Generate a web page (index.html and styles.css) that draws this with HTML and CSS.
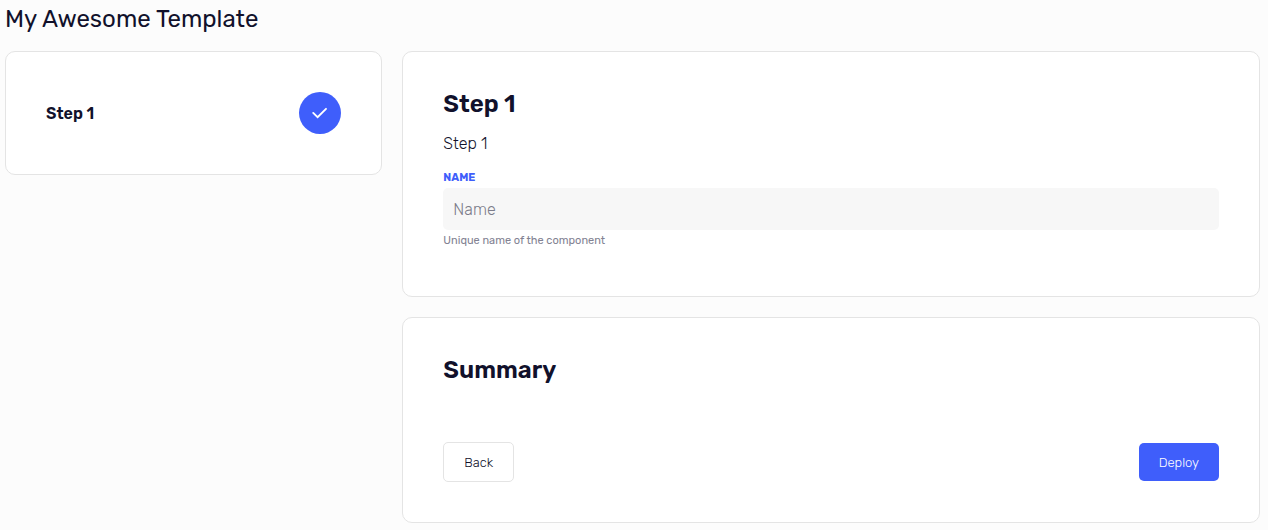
FILE: index.html
```html
<!DOCTYPE html>
<html lang="en">
<head>
<meta charset="utf-8">
<title>My Awesome Template</title>
<meta name="viewport" content="width=device-width, initial-scale=1">
<link rel="stylesheet" href="styles.css">
</head>
<body>
<main class="page">
  <h1 class="page-title">My Awesome Template</h1>
  <div class="layout">
    <nav class="card steps" aria-label="Steps">
      <span class="step-name">Step 1</span>
      <span class="step-badge">
        <svg viewBox="0 0 20 20" width="20" height="20" aria-hidden="true"><path d="M3.2 9.9 7.6 14.2 16 5.8" fill="none" stroke="currentColor" stroke-width="1.9" stroke-linecap="round"/></svg>
      </span>
    </nav>
    <form class="content">
      <section class="card">
        <h2 class="card-title">Step 1</h2>
        <p class="card-text">Step 1</p>
        <label class="label" for="name">NAME</label>
        <input class="input" id="name" type="text" placeholder="Name">
        <p class="hint">Unique name of the component</p>
      </section>
      <section class="card">
        <h2 class="card-title">Summary</h2>
        <div class="actions">
          <button class="button" type="button">Back</button>
          <button class="button button-primary" type="submit">Deploy</button>
        </div>
      </section>
    </form>
  </div>
</main>
</body>
</html>
```
FILE: styles.css
```css
* { box-sizing: border-box; }
body {
  margin: 0;
  background: #fcfcfc;
  color: #11112b;
  font-family: Rubik, Roboto, "Liberation Sans", sans-serif;
  font-size: 16px;
}
h1, h2, p { margin: 0; }
.page { padding: 3px 8px 7px 5px; }
.page-title {
  font-size: 24px;
  line-height: 32px;
  font-weight: 400;
}
.layout {
  display: grid;
  grid-template-columns: 22fr 50fr;
  gap: 20px;
  align-items: start;
  margin-top: 16px;
}
.card {
  padding: 40px;
  background: #fff;
  border: 1px solid #e4e4e4;
  border-radius: 10px;
}
.steps {
  display: flex;
  align-items: center;
  justify-content: space-between;
}
.step-name { font-weight: 600; }
.step-badge {
  display: flex;
  align-items: center;
  justify-content: center;
  width: 42px;
  height: 42px;
  border-radius: 50%;
  background: #3f5efb;
  color: #fff;
}
.content {
  display: grid;
  gap: 20px;
}
.card-title {
  font-size: 24px;
  line-height: 24px;
  font-weight: 600;
}
.card-text {
  margin-top: 16px;
  line-height: 24px;
  font-weight: 300;
}
.label {
  display: block;
  margin-top: 16px;
  font-size: 11px;
  line-height: 12px;
  font-weight: 700;
  color: #3f5efb;
}
.input {
  display: block;
  width: 100%;
  height: 42px;
  margin-top: 4px;
  padding: 0 10px;
  border: 0;
  border-radius: 5px;
  background: #f7f7f7;
  color: inherit;
  font: inherit;
  font-weight: 300;
}
.input::placeholder { color: #7c7c8a; opacity: 1; }
.hint {
  margin-top: 4px;
  padding-bottom: 8px;
  font-size: 11px;
  line-height: 14px;
  color: #828292;
}
.actions {
  display: flex;
  align-items: center;
  justify-content: space-between;
  margin-top: 60px;
}
.button {
  height: 40px;
  padding: 0 20px;
  border: 1px solid #e4e4e4;
  border-radius: 5px;
  background: #fff;
  color: inherit;
  font: inherit;
  font-size: 13px;
  font-weight: 300;
}
.button-primary {
  height: 38px;
  border: 0;
  background: #3f5efb;
  color: #fff;
}
```
